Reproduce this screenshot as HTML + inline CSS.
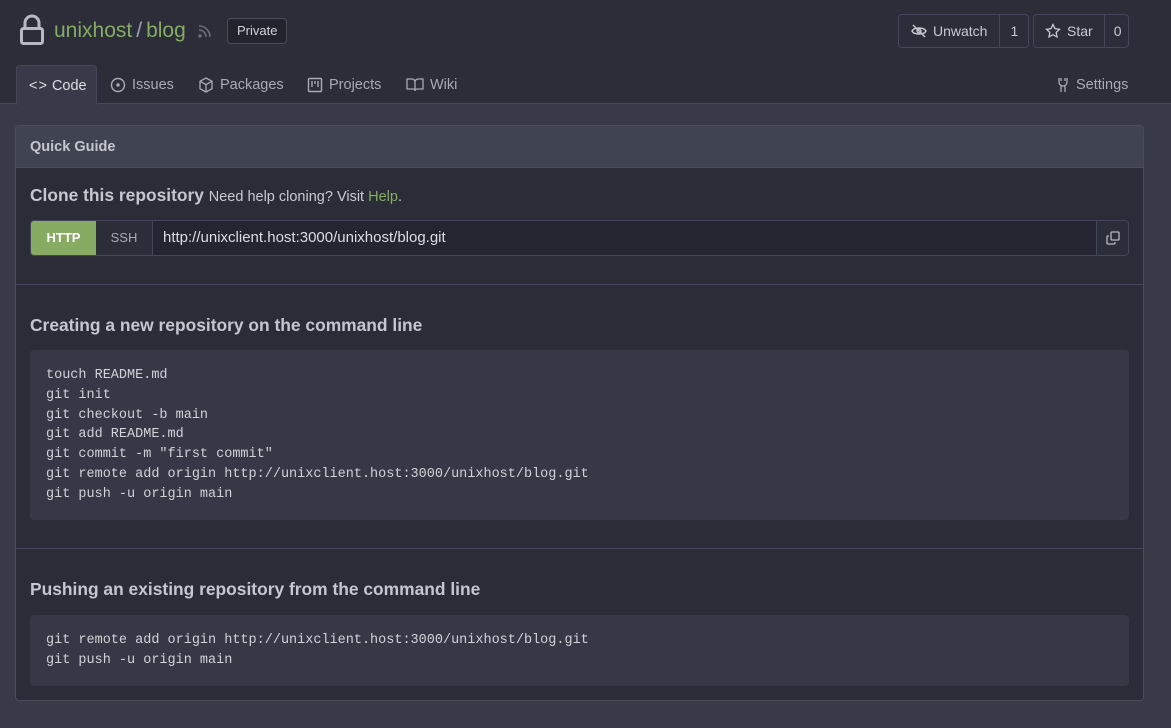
<!DOCTYPE html>
<html><head><meta charset="utf-8"><style>
*{box-sizing:border-box;margin:0;padding:0}
body{width:1171px;height:728px;background:#383a47;font-family:"Liberation Sans",sans-serif;color:#d0d2d9;position:relative;overflow:hidden}
.hdr{position:absolute;left:0;top:0;width:1171px;height:104px;background:#2b2d39;border-bottom:1px solid #44465a}
.abs{position:absolute;white-space:nowrap}
.title{left:54px;top:19px;font-size:21px;color:#87ab63}
.title span{color:#9ea2ad}
.priv{left:227px;top:18px;height:26px;padding:0 9px;border:1px solid #4a4c58;border-radius:4px;background:#22232d;font-size:13px;line-height:24px;color:#d0d2d9}
.btn{top:14px;height:34px;border:1px solid #44465a;border-radius:4px;background:#2b2d39;display:flex;font-size:14px;color:#c8cad2}
.btn div{display:flex;align-items:center;padding:0 12px}
.btn .n{border-left:1px solid #44465a;padding:0 10px}
.tab{top:65px;height:40px;display:flex;align-items:center;gap:6px;font-size:14.5px;color:#a8abb5}
.tab.act{background:#383a47;border:1px solid #44465a;border-bottom:none;border-radius:4px 4px 0 0;color:#dcdee4;padding:0 12px}
.box{left:15px;top:125px;width:1129px;height:576px;border:1px solid #4a4c58;border-radius:4px;background:#2a2c38;overflow:hidden}
.bh{height:42px;background:#404350;border-bottom:1px solid #4a4c58;font-size:14.5px;font-weight:bold;color:#c4c7cf;padding:13px 14px}
h3{position:absolute;left:14px;font-size:17.4px;font-weight:bold;color:#c4c7cf;white-space:nowrap}
.code{position:absolute;left:14px;width:1099px;background:#363845;border-radius:4px;font-family:"Liberation Mono",monospace;font-size:13.5px;line-height:19.8px;color:#d0d2d9;padding:16px 16px;white-space:pre}
.div{position:absolute;left:0;width:1129px;height:1px;background:#44465a}
</style></head><body>
<div class="hdr"></div>
<svg class="abs" style="left:19px;top:14px" width="26" height="32" viewBox="0 0 26 32"><path d="M6 14V9a7 7 0 0 1 14 0v5" fill="none" stroke="#b7b9c3" stroke-width="3"/><rect x="2.5" y="14.5" width="21" height="15" rx="2" fill="none" stroke="#b7b9c3" stroke-width="3"/></svg>
<div class="abs title">unixhost<span style="margin:0 4px">/</span>blog</div>
<svg class="abs" style="left:197px;top:23px" width="16" height="16" viewBox="0 0 16 16" fill="none" stroke="#6b6e7a" stroke-width="1.6"><path d="M2 3a11 11 0 0 1 11 11M2 7a7 7 0 0 1 7 7"/><circle cx="3" cy="13" r="1" fill="#6b6e7a"/></svg>
<div class="abs priv">Private</div>
<div class="abs btn" style="left:898px;width:131px"><div style="gap:6px"><svg width="16" height="16" viewBox="0 0 16 16" fill="none" stroke="#c8cad2" stroke-width="1.4"><path d="M1 8c2-4 12-4 14 0-2 4-12 4-14 0z"/><circle cx="8" cy="8" r="2"/><path d="M2 2l12 12"/></svg>Unwatch</div><div class="n">1</div></div>
<div class="abs btn" style="left:1033px;width:96px"><div style="gap:6px;padding:0 11px"><svg width="16" height="16" viewBox="0 0 16 16" fill="none" stroke="#c8cad2" stroke-width="1.3"><path d="M8 1.5l2 4.2 4.5.6-3.3 3.1.8 4.5L8 11.7l-4 2.2.8-4.5L1.5 6.3 6 5.7z"/></svg>Star</div><div class="n" style="padding:0 9px">0</div></div>
<div class="abs tab act" style="left:16px;width:81px;gap:4px"><span style="letter-spacing:1px">&lt;&gt;</span>Code</div>
<div class="abs tab" style="left:110px"><svg width="16" height="16" viewBox="0 0 16 16" fill="none" stroke="#a8abb5" stroke-width="1.4"><circle cx="8" cy="8" r="6.5"/><circle cx="8" cy="8" r="1" fill="#a8abb5"/></svg>Issues</div>
<div class="abs tab" style="left:198px"><svg width="16" height="16" viewBox="0 0 16 16" fill="none" stroke="#a8abb5" stroke-width="1.3"><path d="M8 1l6 3.3v7.4L8 15l-6-3.3V4.3zM2 4.3L8 7.6l6-3.3M8 7.6V15"/></svg>Packages</div>
<div class="abs tab" style="left:307px"><svg width="16" height="16" viewBox="0 0 16 16" fill="none" stroke="#a8abb5" stroke-width="1.4"><rect x="1.5" y="1.5" width="13" height="13" rx="1"/><path d="M5 4v6M8 4v3M11 4v6"/></svg>Projects</div>
<div class="abs tab" style="left:406px"><svg width="18" height="16" viewBox="0 0 18 16" fill="none" stroke="#a8abb5" stroke-width="1.3"><path d="M1 2h5a3 3 0 0 1 3 3v9a2 2 0 0 0-2-2H1zM17 2h-5a3 3 0 0 0-3 3v9a2 2 0 0 1 2-2h6z"/></svg>Wiki</div>
<div class="abs tab" style="left:1056px"><svg width="14" height="16" viewBox="0 0 14 16" fill="none" stroke="#a8abb5" stroke-width="1.3"><path d="M3 1v4a4 4 0 0 0 8 0V1M5 9v6M9 9v6M5 1v3M9 1v3"/></svg>Settings</div>
<div class="abs box">
<div class="bh">Quick Guide</div>
<div class="abs" style="left:14px;top:59px;font-size:17.4px;font-weight:bold;color:#c4c7cf">Clone this repository <span style="font-size:14.5px;font-weight:normal;color:#c8cad2">Need help cloning? Visit <span style="color:#87ab63">Help</span>.</span></div>
<div class="abs" style="left:14px;top:94px;width:1099px;height:36px;border:1px solid #44465a;border-radius:4px;background:#242530;display:flex;overflow:hidden">
<div style="width:65px;background:#87ab63;color:#fff;font-size:13px;font-weight:bold;text-align:center;line-height:34px">HTTP</div>
<div style="width:57px;background:#2b2d39;border-right:1px solid #44465a;color:#a8abb5;font-size:13px;text-align:center;line-height:34px">SSH</div>
<div style="flex:1;padding-left:10px;line-height:34px;font-size:15px;color:#dcdee4">http://unixclient.host:3000/unixhost/blog.git</div>
<div style="width:32px;border-left:1px solid #44465a;background:#2b2d39;display:flex;align-items:center;justify-content:center"><svg width="16" height="16" viewBox="0 0 16 16" fill="none" stroke="#b7b9c3" stroke-width="1.3"><rect x="6" y="2" width="8" height="8" rx="1"/><path d="M4 6H3a1 1 0 0 0-1 1v6a1 1 0 0 0 1 1h6a1 1 0 0 0 1-1v-1"/></svg></div>
</div>
<div class="div" style="top:158px"></div>
<h3 style="top:189px">Creating a new repository on the command line</h3>
<div class="code" style="top:224px;height:170px">touch README.md
git init
git checkout -b main
git add README.md
git commit -m "first commit"
git remote add origin http://unixclient.host:3000/unixhost/blog.git
git push -u origin main</div>
<div class="div" style="top:422px"></div>
<h3 style="top:453px">Pushing an existing repository from the command line</h3>
<div class="code" style="top:489px;height:71px">git remote add origin http://unixclient.host:3000/unixhost/blog.git
git push -u origin main</div>
</div>
</body></html>
